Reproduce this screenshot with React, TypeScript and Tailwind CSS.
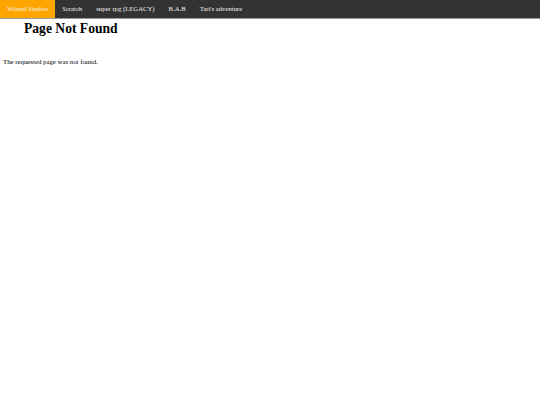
import React from "react";

export default function App() {
  const items = ["Scratch", "super rpg (LEGACY)", "B.A.B", "Tari's adventure"];
  return (
    <div className="w-[540px] h-[405px] bg-white" style={{ fontFamily: '"Liberation Serif", serif' }}>
      <div className="flex h-[19px] bg-[#333333] border-b border-[#9a9a9a]">
        <div className="flex items-center px-[7px] bg-[#ffa500] text-[#f2f2f2] text-[6.7px]">Wizard Studios</div>
        {items.map((t) => (
          <div key={t} className="flex items-center px-[7px] text-[#f2f2f2] text-[6.7px]">
            {t}
          </div>
        ))}
      </div>
      <h1 className="pl-[24px] pt-[1px] text-[13.6px] font-bold text-black leading-[18px]">Page Not Found</h1>
      <p className="pl-[3px] mt-[20px] text-[6.8px] text-black leading-[8px]">The requested page was not found.</p>
    </div>
  );
}
